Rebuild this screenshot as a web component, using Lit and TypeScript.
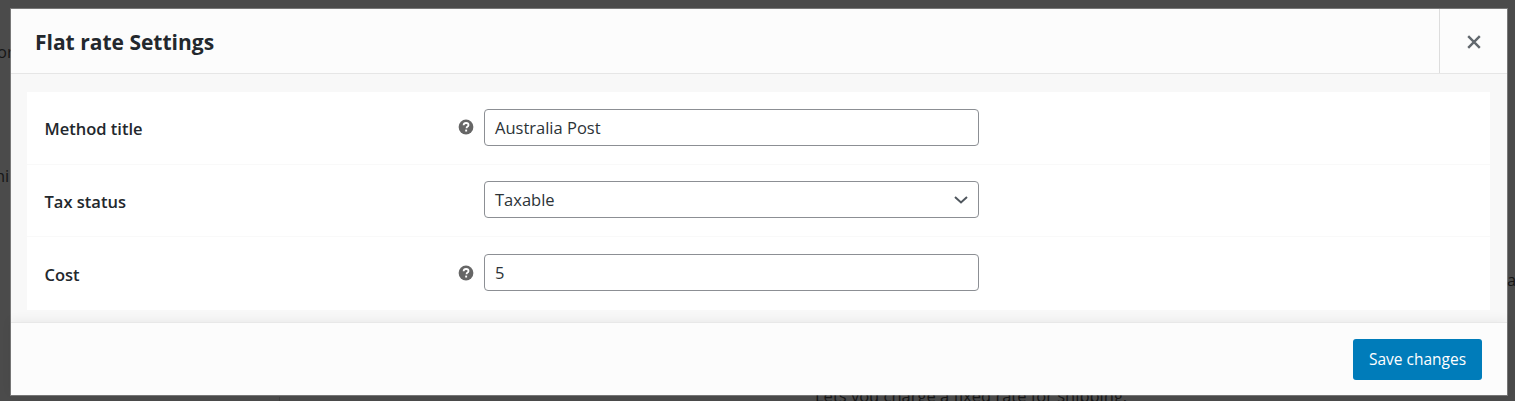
import { LitElement, html, css } from "lit";
import { customElement } from "lit/decorators.js";

const help = html`<svg class="help" viewBox="0 0 16 16" width="16" height="16" aria-hidden="true">
  <circle cx="8" cy="8" r="7.4" fill="#666"></circle>
  <path d="M5.6 6.3c.1-1.5 1-2.3 2.5-2.3 1.5 0 2.4.8 2.4 2 0 .9-.5 1.4-1.2 1.8-.5.3-.7.6-.7 1.1v.3" fill="none" stroke="#fff" stroke-width="1.8"></path>
  <rect x="7.2" y="10.6" width="1.9" height="1.9" fill="#fff"></rect>
</svg>`;

@customElement("app-root")
export class AppRoot extends LitElement {
  static styles = css`
    :host {
      display: block;
      position: relative;
      width: 1515px;
      height: 401px;
      overflow: hidden;
      background: #4b4b4b;
      font-family: "Open Sans", "Noto Sans", "Liberation Sans", sans-serif;
      color: #1d2327;
      box-sizing: border-box;
      padding: 9px 8px 6px 11px;
    }
    .leak {
      position: absolute;
      font-size: 16.5px;
      line-height: 20px;
      color: #161616;
      white-space: nowrap;
    }
    .leak-a { left: -3px; top: 42px; }
    .leak-b { left: -5px; top: 166px; }
    .leak-c { left: 1507px; top: 270px; }
    .leak-d { left: 815px; top: 386px; }
    .tick {
      position: absolute;
      left: 279px;
      top: 397px;
      width: 1px;
      height: 4px;
      background: #3f3f3f;
    }
    .modal {
      position: relative;
      height: 386px;
      background: #f8f8f8;
      display: flex;
      flex-direction: column;
      box-shadow: 0 0 0 1px rgba(255, 255, 255, 0.25);
    }
    header {
      height: 64px;
      flex: none;
      background: #fcfcfc;
      border-bottom: 1px solid #e6e6e6;
      display: flex;
      align-items: center;
      justify-content: space-between;
    }
    h1 {
      margin: 2px 0 0 24px;
      font-size: 21px;
      line-height: 26px;
      font-weight: 700;
      letter-spacing: 0;
      color: #23282d;
    }
    .close {
      width: 68px;
      height: 64px;
      border: 0;
      border-left: 1px solid #ddd;
      background: transparent;
      padding: 2px 0 0;
      display: flex;
      align-items: center;
      justify-content: center;
    }
    .body {
      flex: 1;
      padding: 18px 17px 0 16px;
      min-height: 0;
    }
    .card {
      background: #fff;
      display: flex;
      flex-direction: column;
      padding-bottom: 1px;
    }
    .row {
      height: 71.67px;
      display: flex;
      align-items: center;
      padding-left: 17.5px;
      border-top: 1px solid #f9f9f9;
    }
    .row:first-child {
      border-top: 0;
    }
    label {
      width: 413.5px;
      margin-top: 2px;
      font-size: 16.5px;
      font-weight: 600;
      color: #23282d;
    }
    .help-cell {
      width: 26px;
      display: flex;
      align-items: center;
      margin-bottom: 1px;
    }
    .help {
      display: block;
    }
    .field {
      width: 495px;
      height: 37px;
      margin-bottom: 1px;
      box-sizing: border-box;
      border: 1px solid #8c8f94;
      border-radius: 4px;
      background: #fff;
      padding: 0 10px;
      display: flex;
      align-items: center;
      justify-content: space-between;
      font-size: 16.5px;
      color: #2c3338;
    }
    footer {
      height: 73px;
      flex: none;
      background: #fcfcfc;
      box-shadow: 0 -2px 10px rgba(0, 0, 0, 0.06);
      border-top: 1px solid #e8e8e8;
      box-sizing: border-box;
      display: flex;
      align-items: center;
      justify-content: flex-end;
      padding: 0 25px 0 0;
    }
    .save {
      width: 129px;
      height: 41px;
      border: 0;
      border-radius: 3px;
      background: #007cba;
      color: #fff;
      font: inherit;
      font-size: 15.5px;
      padding: 0;
    }
  `;

  render() {
    return html`
      <span class="leak leak-a">or</span>
      <span class="leak leak-b">hi</span>
      <span class="leak leak-c">a</span>
      <span class="leak leak-d">Lets you charge a fixed rate for shipping.</span>
      <span class="tick"></span>
      <section class="modal">
        <header>
          <h1>Flat rate Settings</h1>
          <button class="close" aria-label="Close">
            <svg viewBox="0 0 14 14" width="14" height="14">
              <path d="M1.2 1.2l11.6 11.6M12.8 1.2L1.2 12.8" stroke="#62686e" stroke-width="2.4" fill="none"></path>
            </svg>
          </button>
        </header>
        <div class="body">
          <div class="card">
            <div class="row">
              <label>Method title</label>
              <span class="help-cell">${help}</span>
              <div class="field">Australia Post</div>
            </div>
            <div class="row">
              <label>Tax status</label>
              <span class="help-cell"></span>
              <div class="field">
                Taxable
                <svg viewBox="0 0 14 8" width="14" height="8">
                  <path d="M1 1l6 5.5L13 1" stroke="#50575e" stroke-width="2" fill="none"></path>
                </svg>
              </div>
            </div>
            <div class="row">
              <label>Cost</label>
              <span class="help-cell">${help}</span>
              <div class="field">5</div>
            </div>
          </div>
        </div>
        <footer><button class="save">Save changes</button></footer>
      </section>
    `;
  }
}
